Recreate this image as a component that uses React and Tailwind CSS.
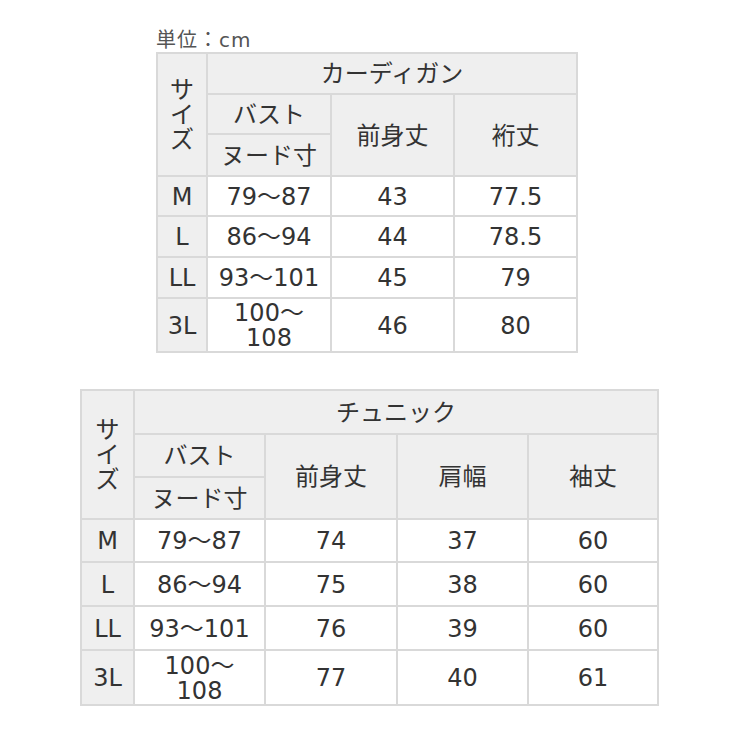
import React from 'react';

const font = { fontFamily: '"DejaVu Sans", "Noto Sans CJK JP", sans-serif' };

const cardigan = [
  ['M', '79～87', '43', '77.5'],
  ['L', '86～94', '44', '78.5'],
  ['LL', '93～101', '45', '79'],
  ['3L', '100～\n108', '46', '80'],
];

const tunic = [
  ['M', '79～87', '74', '37', '60'],
  ['L', '86～94', '75', '38', '60'],
  ['LL', '93～101', '76', '39', '60'],
  ['3L', '100～\n108', '77', '40', '61'],
];

const cell = 'border-2 border-[#d9d9d9] text-center align-middle px-0 pb-0 pt-[2px]';
const head = cell + ' bg-[#efefef]';

const SizeTable = ({ title, cols, widths, rows, heights }) => (
  <table className="border-collapse table-fixed text-[24px] leading-[25px] text-[#333]">
    <colgroup>
      {widths.map((w, i) => (
        <col key={i} style={{ width: w }} />
      ))}
    </colgroup>
    <tbody>
      <tr style={{ height: heights[0] }}>
        <td rowSpan={3} className={head}>
          サ<br />イ<br />ズ
        </td>
        <td colSpan={cols.length + 1} className={head}>{title}</td>
      </tr>
      <tr style={{ height: heights[1] }}>
        <td className={head}>バスト</td>
        {cols.map((c) => (
          <td key={c} rowSpan={2} className={head}>{c}</td>
        ))}
      </tr>
      <tr style={{ height: heights[2] }}>
        <td className={head}>ヌード寸</td>
      </tr>
      {rows.map((r, i) => (
        <tr key={r[0]} style={{ height: heights[3 + i] }}>
          <td className={head}>{r[0]}</td>
          {r.slice(1).map((v, j) => (
            <td key={j} className={cell + ' bg-white whitespace-pre-line'}>{v}</td>
          ))}
        </tr>
      ))}
    </tbody>
  </table>
);

export default function App() {
  return (
    <div className="w-[740px] h-[740px] bg-white" style={font}>
      <div className="pl-[156px] pt-[28px]">
        <div className="text-[20px] leading-[24px] text-[#555] tracking-[1px]">単位：cm</div>
        <SizeTable
          title="カーディガン"
          cols={['前身丈', '裄丈']}
          widths={[50, 124, 123, 123]}
          heights={[41, 40, 42, 40, 41, 41, 51]}
          rows={cardigan}
        />
      </div>
      <div className="pl-[80px] pt-[36px]">
        <SizeTable
          title="チュニック"
          cols={['前身丈', '肩幅', '袖丈']}
          widths={[53, 131, 132, 131, 130]}
          heights={[44, 43, 42, 43, 44, 44, 55]}
          rows={tunic}
        />
      </div>
    </div>
  );
}
